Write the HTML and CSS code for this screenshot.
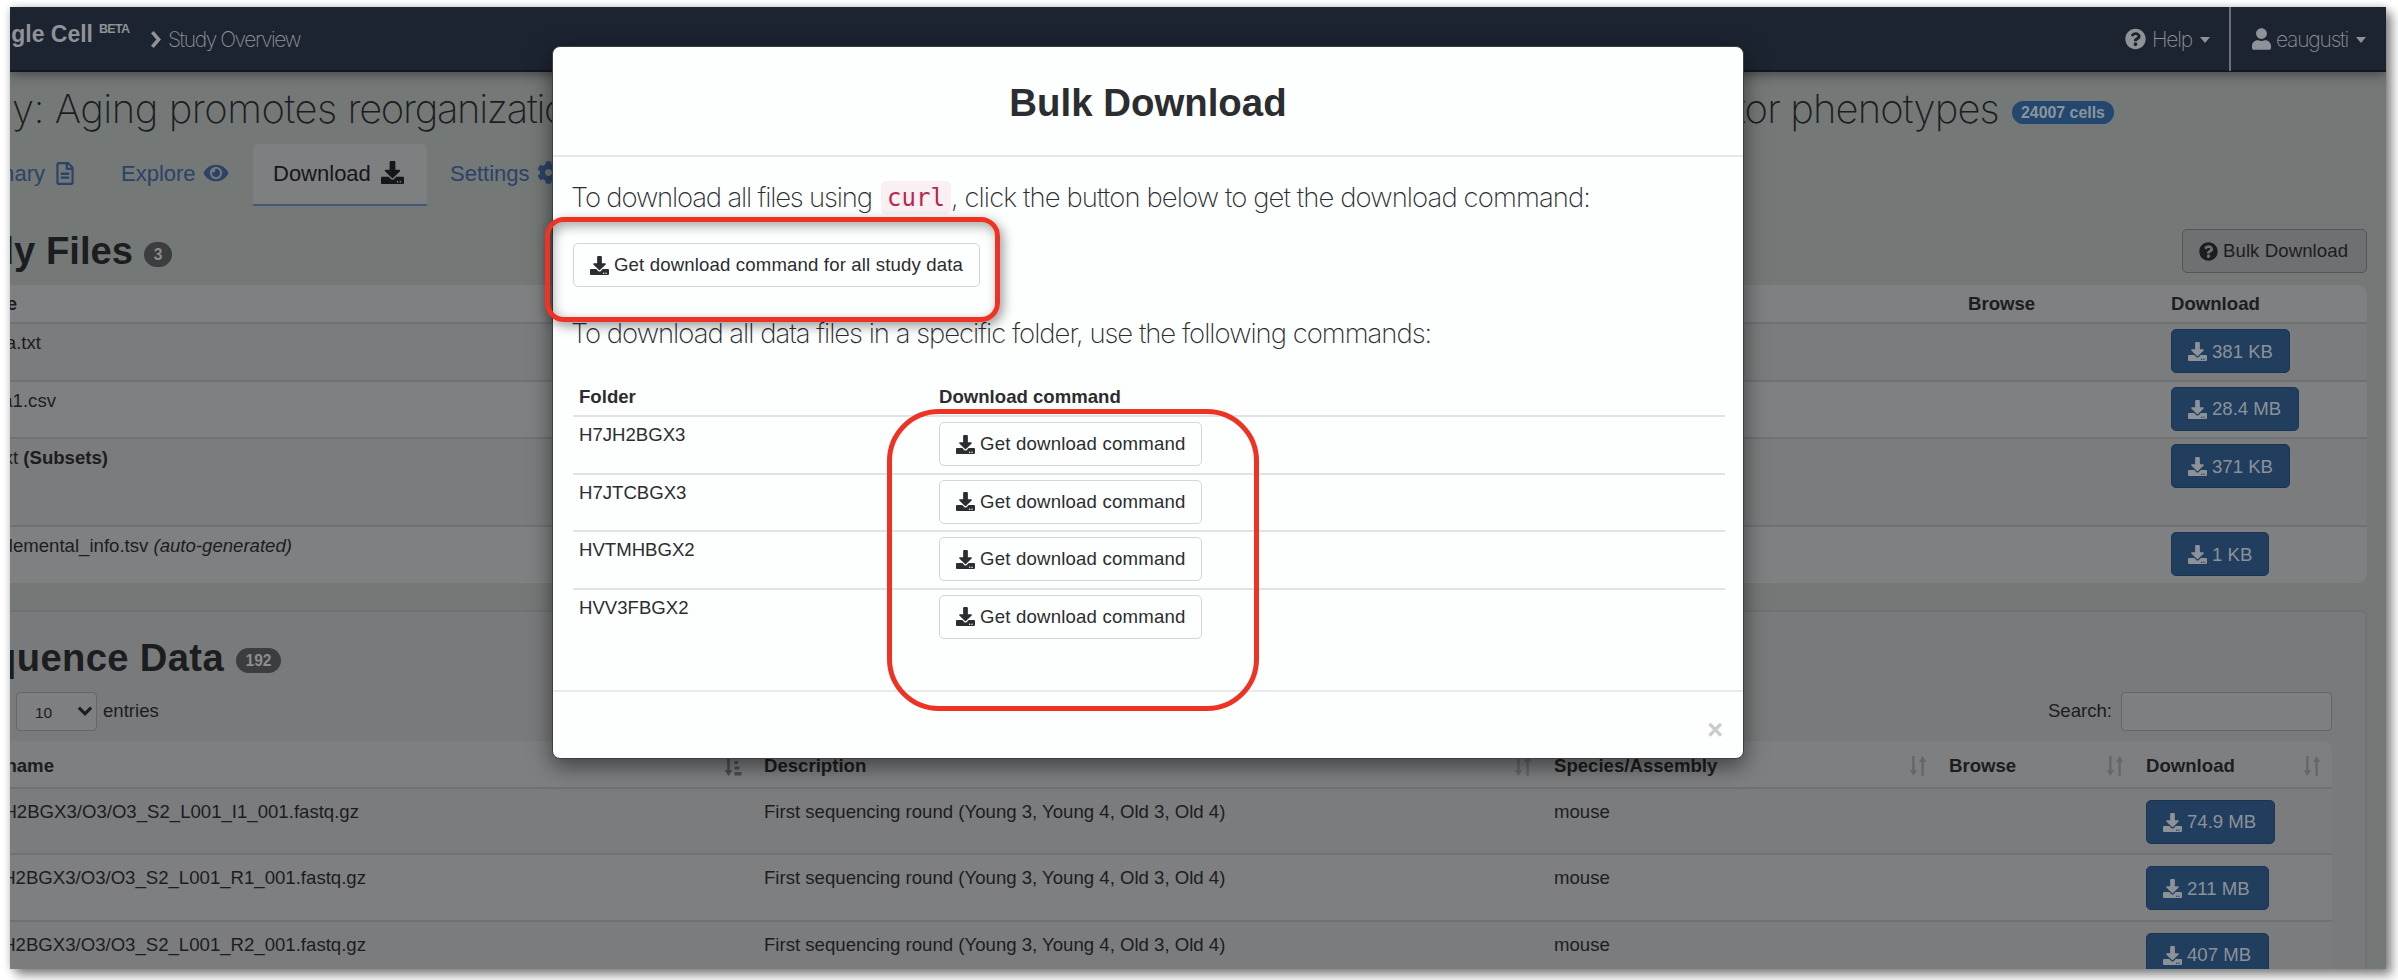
FILE: index.html
```html
<!DOCTYPE html>
<html lang="en">
<head>
<meta charset="utf-8">
<title>Single Cell - Study Overview</title>
<link rel="stylesheet" href="styles.css">
</head>
<body>
<svg class="sprite" aria-hidden="true">
  <symbol id="download" viewBox="0 0 512 512"><path d="M216 0h80c13.3 0 24 10.7 24 24v168h87.7c17.8 0 26.7 21.5 14.1 34.1L269.7 378.3c-7.5 7.5-19.8 7.5-27.3 0L90.1 226.1c-12.6-12.6-3.7-34.1 14.1-34.1H192V24c0-13.3 10.7-24 24-24zm296 376v112c0 13.3-10.7 24-24 24H24c-13.3 0-24-10.7-24-24V376c0-13.3 10.7-24 24-24h146.7l49 49c20.1 20.1 52.5 20.1 72.6 0l49-49H488c13.3 0 24 10.7 24 24zm-124 88c0-11-9-20-20-20s-20 9-20 20 9 20 20 20 20-9 20-20zm64 0c0-11-9-20-20-20s-20 9-20 20 9 20 20 20 20-9 20-20z"/></symbol>
  <symbol id="question" viewBox="0 0 512 512"><path d="M504 256c0 136.997-111.043 248-248 248S8 392.997 8 256C8 119.083 119.043 8 256 8s248 111.083 248 248zM262.655 90c-54.497 0-89.255 22.957-116.549 63.758-3.536 5.286-2.353 12.415 2.715 16.258l34.699 26.31c5.205 3.947 12.621 3.008 16.665-2.122 17.864-22.658 30.113-35.797 57.303-35.797 20.429 0 45.698 13.148 45.698 32.958 0 14.976-12.363 22.667-32.534 33.976C247.128 238.528 216 254.941 216 296v4c0 6.627 5.373 12 12 12h56c6.627 0 12-5.373 12-12v-1.333c0-28.462 83.186-29.647 83.186-106.667 0-58.002-60.165-102-116.531-102zM256 338c-25.365 0-46 20.635-46 46 0 25.364 20.635 46 46 46s46-20.636 46-46c0-25.365-20.635-46-46-46z"/></symbol>
  <symbol id="user" viewBox="0 0 448 512"><path d="M224 256c70.7 0 128-57.3 128-128S294.7 0 224 0 96 57.3 96 128s57.3 128 128 128zm89.6 32h-16.7c-22.2 10.2-46.9 16-72.9 16s-50.6-5.8-72.9-16h-16.7C60.2 288 0 348.2 0 422.4V464c0 26.5 21.5 48 48 48h352c26.5 0 48-21.5 48-48v-41.6c0-74.2-60.2-134.4-134.4-134.4z"/></symbol>
  <symbol id="eye" viewBox="0 0 576 512"><path d="M572.52 241.4C518.29 135.59 410.93 64 288 64S57.68 135.64 3.48 241.41a32.35 32.35 0 0 0 0 29.19C57.71 376.41 165.07 448 288 448s230.32-71.64 284.52-177.41a32.35 32.35 0 0 0 0-29.19zM288 400a144 144 0 1 1 144-144 143.93 143.93 0 0 1-144 144zm0-240a95.31 95.31 0 0 0-25.31 3.79 47.85 47.85 0 0 1-66.9 66.9A95.78 95.78 0 1 0 288 160z"/></symbol>
  <symbol id="file" viewBox="0 0 384 512"><path d="M288 248v28c0 6.6-5.4 12-12 12H108c-6.6 0-12-5.4-12-12v-28c0-6.6 5.4-12 12-12h168c6.6 0 12 5.4 12 12zm-12 72H108c-6.6 0-12 5.4-12 12v28c0 6.6 5.4 12 12 12h168c6.6 0 12-5.4 12-12v-28c0-6.6-5.4-12-12-12zm108-188.1V464c0 26.5-21.5 48-48 48H48c-26.5 0-48-21.5-48-48V48C0 21.5 21.5 0 48 0h204.1C264.8 0 277 5.1 286 14.1L369.9 98c9 8.9 14.1 21.2 14.1 33.9zm-128-80V128h76.1L256 51.9zM336 464V176H232c-13.3 0-24-10.7-24-24V48H48v416h288z"/></symbol>
  <symbol id="cog" viewBox="0 0 512 512"><path d="M487.4 315.7l-42.6-24.6c4.3-23.2 4.3-47 0-70.2l42.6-24.6c4.9-2.8 7.1-8.6 5.5-14-11.1-35.6-30-67.8-54.7-94.6-3.8-4.1-10-5.1-14.8-2.3L380.8 110c-17.9-15.4-38.5-27.3-60.8-35.1V25.8c0-5.6-3.9-10.5-9.4-11.7-36.7-8.2-74.3-7.8-109.2 0-5.5 1.2-9.4 6.1-9.4 11.7V75c-22.2 7.9-42.8 19.8-60.8 35.1L88.7 85.5c-4.9-2.8-11-1.9-14.8 2.3-24.7 26.7-43.6 58.9-54.7 94.6-1.7 5.4.6 11.2 5.5 14L67.3 221c-4.3 23.2-4.3 47 0 70.2l-42.6 24.6c-4.9 2.8-7.1 8.6-5.5 14 11.1 35.6 30 67.8 54.7 94.6 3.8 4.1 10 5.1 14.8 2.3l42.6-24.6c17.9 15.4 38.5 27.3 60.8 35.1v49.2c0 5.6 3.9 10.5 9.4 11.7 36.7 8.2 74.3 7.8 109.2 0 5.5-1.2 9.4-6.1 9.4-11.7v-49.2c22.2-7.9 42.8-19.8 60.8-35.1l42.6 24.6c4.9 2.8 11 1.9 14.8-2.3 24.7-26.7 43.6-58.9 54.7-94.6 1.5-5.5-.7-11.3-5.6-14.1zM256 336c-44.1 0-80-35.9-80-80s35.9-80 80-80 80 35.9 80 80-35.9 80-80 80z"/></symbol>
  <symbol id="sort" viewBox="0 0 18 20"><path d="M3.200 0h2.400v14H8l-3.600 6L.8 14h2.400zM12.400 20h2.400V6h2.400L13.600 0 10 6h2.400z"/></symbol>
  <symbol id="sort-asc" viewBox="0 0 18 20"><path d="M3.200 0h2.600v14H8.400l-3.900 6L.6 14h2.600zM10.500 0h2v3h-2zM10.500 5h3.500v3h-3.500zM10.500 10.500h5v3h-5zM10.500 16h7v3.500h-7z"/></symbol>
</svg>
<div class="frame">
  <header class="nav">
    <div class="brand">gle Cell</div>
    <div class="beta">BETA</div>
    <svg class="chev" viewBox="0 0 10 18"><path d="M2 2l6 7-6 7" fill="none" stroke="currentColor" stroke-width="3.400"/></svg>
    <div class="crumb">Study Overview</div>
    <div class="nav-help"><svg class="ic22"><use href="#question"/></svg><span class="help">Help</span><i class="caret"></i></div>
    <div class="nav-user"><svg class="usr"><use href="#user"/></svg><span class="uname">eaugusti</span><i class="caret"></i></div>
  </header>
  <div class="title">
    <span class="title-a">y: Aging promotes <span class="tight">reorganization</span></span>
    <span class="title-b">tor phenotypes</span>
    <span class="cells">24007 cells</span>
  </div>
  <nav class="tabs">
    <div class="tab t1"><span class="clip">Summary</span><svg class="i-file"><use href="#file"/></svg></div>
    <div class="tab t2">Explore<svg class="i-eye"><use href="#eye"/></svg></div>
    <div class="tab active">Download<svg class="i-dl"><use href="#download"/></svg></div>
    <div class="tab t4">Settings<svg class="i-dl"><use href="#cog"/></svg></div>
  </nav>
  <div class="files-head">
    <h2 class="h h-files">Study Files</h2><span class="badge b3">3</span>
    <div class="bulk"><svg class="ic"><use href="#question"/></svg>Bulk Download</div>
  </div>
  <section class="files">
    <div class="frow fhead"><b class="cut c-e">Name</b><b>Browse</b><b>Download</b></div>
    <div class="frow odd"><div class="cut c-1">metadata.txt</div><span></span><div class="btn w119"><svg class="ic"><use href="#download"/></svg>381 KB</div></div>
    <div class="frow"><div class="cut c-2">data1.csv</div><span></span><div class="btn w128"><svg class="ic"><use href="#download"/></svg>28.4 MB</div></div>
    <div class="frow odd tall"><div class="cut c-3">txt&nbsp;<b>(Subsets)</b></div><span></span><div class="btn w119"><svg class="ic"><use href="#download"/></svg>371 KB</div></div>
    <div class="frow"><div class="cut c-4">supplemental_info.tsv&nbsp;<em>(auto-generated)</em></div><span></span><div class="btn w98"><svg class="ic"><use href="#download"/></svg>1 KB</div></div>
  </section>
  <section class="panel">
    <div class="seq-head"><h2 class="h h-seq">Sequence Data</h2><span class="badge b192">192</span></div>
    <div class="controls">
      <div class="select">10<svg class="sel-v" viewBox="0 0 14 9"><path d="M1.500 1.500l5.500 5.500 5.500-5.500" fill="none" stroke="currentColor" stroke-width="2.800"/></svg></div>
      <span class="entries">entries</span>
      <span class="search">Search:</span><div class="input"></div>
    </div>
    <div class="seq">
      <div class="srow shead">
        <div class="th"><b class="cut c-n">Filename</b><svg class="so dark"><use href="#sort-asc"/></svg></div>
        <div class="th"><b>Description</b><svg class="so"><use href="#sort"/></svg></div>
        <div class="th"><b>Species/Assembly</b><svg class="so"><use href="#sort"/></svg></div>
        <div class="th"><b>Browse</b><svg class="so"><use href="#sort"/></svg></div>
        <div class="th"><b>Download</b><svg class="so"><use href="#sort"/></svg></div>
      </div>
      <div class="srow odd"><div class="cut s-1">H7JH2BGX3/O3/O3_S2_L001_I1_001.fastq.gz</div><span class="desc">First sequencing round (Young 3, Young 4, Old 3, Old 4)</span><span>mouse</span><span></span><div class="btn w129"><svg class="ic"><use href="#download"/></svg>74.9 MB</div></div>
      <div class="srow"><div class="cut s-2">H7JH2BGX3/O3/O3_S2_L001_R1_001.fastq.gz</div><span class="desc">First sequencing round (Young 3, Young 4, Old 3, Old 4)</span><span>mouse</span><span></span><div class="btn w123"><svg class="ic"><use href="#download"/></svg>211 MB</div></div>
      <div class="srow odd"><div class="cut s-2">H7JH2BGX3/O3/O3_S2_L001_R2_001.fastq.gz</div><span class="desc">First sequencing round (Young 3, Young 4, Old 3, Old 4)</span><span>mouse</span><span></span><div class="btn w123"><svg class="ic"><use href="#download"/></svg>407 MB</div></div>
    </div>
  </section>
</div>
<div class="modal">
  <div class="m-head">Bulk Download</div>
  <div class="m-body">
    <p class="lead"><span class="l1">To download all files using</span><code>curl</code><span class="l2">, click the button below to get the download command:</span></p>
    <div class="get get-all"><svg class="ic"><use href="#download"/></svg><span>Get download command for all study data</span></div>
    <p class="lead lead2"><span class="l3">To download all data files in a specific folder, use the following commands:</span></p>
    <div class="mrow mhead"><b>Folder</b><b>Download command</b></div>
    <div class="mrow"><span>H7JH2BGX3</span><div class="get"><svg class="ic"><use href="#download"/></svg><span>Get download command</span></div></div>
    <div class="mrow"><span>H7JTCBGX3</span><div class="get"><svg class="ic"><use href="#download"/></svg><span>Get download command</span></div></div>
    <div class="mrow"><span>HVTMHBGX2</span><div class="get"><svg class="ic"><use href="#download"/></svg><span>Get download command</span></div></div>
    <div class="mrow"><span>HVV3FBGX2</span><div class="get"><svg class="ic"><use href="#download"/></svg><span>Get download command</span></div></div>
  </div>
  <div class="m-foot">×</div>
</div>
<div class="mark mark-all"></div>
<div class="mark mark-folders"></div>
</body>
</html>
```
FILE: styles.css
```css
* { box-sizing: border-box; }
body {
  margin: 0; padding: 7px 12px 11px 10px; height: 980px; overflow: hidden;
  position: relative; background: #fff; color: #1b1d1f;
  font: 18.6px/28px "Liberation Sans", Arial, sans-serif; white-space: nowrap;
}
.sprite { position: absolute; width: 0; height: 0; }
svg { fill: currentColor; flex: none; display: block; }
.frame {
  width: 2376px; height: 962px; overflow: hidden; background: #747877;
  box-shadow: 6px 6px 10px rgba(0,0,0,.45), 0 0 8px rgba(0,0,0,.2);
}

.nav {
  height: 65px; display: flex; align-items: center; background: #1c2432;
  border-bottom: 2px solid #121820; color: #8f9296; position: relative;
  box-shadow: 0 2px 12px rgba(0,0,0,.45);
}
.brand { width: 83px; display: flex; justify-content: flex-end; font-weight: bold; font-size: 23px; margin-bottom: 9px; }
.beta { width: 52px; padding-left: 6px; font-weight: bold; font-size: 12.5px; margin-bottom: 20px; letter-spacing: -.7px; }
.chev { width: 11px; height: 19px; margin-left: 5px; margin-top: 1px; }
.crumb { font: 200 21px/28px Inter, sans-serif; margin: 2px 0 0 7px; letter-spacing: -1.45px; }
.nav-help { margin-left: auto; width: 104px; display: flex; align-items: center; height: 65px; }
.nav-user { width: 157px; padding-left: 21px; display: flex; align-items: center; height: 65px; border-left: 2px solid #6b6f75; }
.ic22 { width: 21px; height: 22px; }
.usr { width: 19px; height: 22px; }
.help, .uname { font: 200 21px/28px Inter, sans-serif; margin: 2px 0 0 6px; letter-spacing: -1.2px; width: 48px; }
.uname { width: 80px; margin-left: 5px; }
.caret { border: 5.5px solid transparent; border-top: 6.5px solid #8f9296; border-bottom: 0; margin-top: 2px; }

.title { height: 72px; padding-top: 1px; display: flex; align-items: center; font: 200 40px/60px Inter, sans-serif; }
.title-a { width: 1725px; padding-left: 2px; letter-spacing: -.5px; }
.tight { letter-spacing: -1.35px; }
.title-b { width: 277px; letter-spacing: -.9px; }
.cells { width: 102px; height: 23px; border-radius: 12px; background: #23476e; color: #8b949d; font: bold 15.9px/24px "Liberation Sans", sans-serif; text-align: center; margin-top: 7px; }

.tabs { display: flex; height: 62px; font-size: 22px; color: #2b4368; }
.tab { display: flex; align-items: center; padding-bottom: 3px; }
.t1 { width: 111px; }
.clip { width: 35px; display: flex; justify-content: flex-end; }
.i-file { width: 18px; height: 23px; margin-left: 11px; }
.t2 { width: 132px; }
.i-eye { width: 26px; height: 22px; margin-left: 7px; margin-bottom: 2px; }
.i-dl { width: 23px; height: 23px; margin-left: 10px; margin-bottom: 3px; }
.active { width: 174px; padding-left: 20px; background: #7e7f81; border-bottom: 2px solid #44577a; border-radius: 6px 6px 0 0; color: #15171a; padding-bottom: 1px; }
.t4 { padding-left: 23px; }
.t4 .i-dl { margin-left: 7px; }

.files-head { height: 79px; padding-top: 11px; display: flex; align-items: center; }
.h { margin: 0; font-size: 38.2px; line-height: 50px; display: flex; justify-content: flex-end; flex: none; }
.h-files { width: 123px; }
.badge { background: #3b3d3e; color: #8c8d8e; font-weight: bold; font-size: 15.6px; line-height: 25px; height: 25px; border-radius: 13px; text-align: center; }
.b3 { width: 28px; margin-left: 11px; margin-top: 7px; }
.bulk { margin-left: auto; margin-right: 19px; width: 185px; height: 44px; border: 1.5px solid #545757; border-radius: 5px; background: #6f7071; display: flex; align-items: center; padding-left: 16px; letter-spacing: .08px; }
.ic { width: 19px; height: 19px; margin-right: 5px; }

.files { width: 2357px; border-radius: 0 9px 9px 0; background: #7f8082; overflow: hidden; }
.frow { display: grid; grid-template-columns: 1958px 203px 1fr; height: 57.6px; padding-top: 5px; border-top: 2px solid #6f7173; }
.odd { background: #7b7c7d; }
.fhead { height: 37px; border: 0; padding-top: 5px; }
.tall { height: 88px; }
.cut { display: flex; justify-content: flex-end; justify-self: start; }
.c-e { width: 7px; } .c-1 { width: 31px; } .c-2 { width: 46px; } .c-3 { width: 98px; } .c-4 { width: 282px; }
.btn { height: 44px; display: flex; align-items: center; padding-left: 16px; padding-top: 1px; border: 1px solid #1b3552; border-radius: 5px; background: #213e5f; color: #8c9298; }
.w98 { width: 98px; } .w119 { width: 119px; } .w123 { width: 123px; } .w128 { width: 128px; } .w129 { width: 129px; }

.panel { width: 2357px; margin-top: 27px; height: 420px; border: 2px solid #6f7374; border-left: 0; border-radius: 0 6px 0 0; background: #797a7b; padding-top: 19px; }
.seq-head { height: 54px; display: flex; align-items: center; }
.h-seq { width: 214px; letter-spacing: .35px; }
.b192 { width: 45px; margin-left: 12px; margin-top: 5px; }
.controls { display: flex; padding: 7px 33px 10px 6px; align-items: center; height: 56px; }
.select { width: 81px; height: 39px; border: 1.5px solid #646668; border-radius: 4px; background: #7e7f81; display: flex; align-items: center; font-size: 15.5px; padding: 3px 3px 0 18px; justify-content: space-between; }
.sel-v { width: 16px; height: 10px; margin-bottom: 3px; }
.entries { margin-left: 6px; }
.search { margin-left: auto; margin-right: 9px; }
.input { width: 211px; height: 39px; border: 1.5px solid #646668; border-radius: 4px; background: #7e7f81; }
.seq { width: 2322px; border-radius: 0 9px 0 0; background: #7e7f81; overflow: hidden; }
.srow { display: grid; grid-template-columns: 754px 790px 395px 197px 1fr; height: 66.4px; padding-top: 9px; border-top: 2px solid #6f7173; }
.shead { height: 46px; border: 0; padding: 9px 0 5px; }
.srow .btn { margin-top: 2px; }
.th { display: flex; align-items: center; justify-content: space-between; padding-right: 22px; }
.th:last-child { padding-right: 11px; }
.so { width: 18px; height: 20px; color: #656769; }
.dark { color: #4c4e50; }
.c-n { width: 44px; } .s-1 { width: 349px; } .s-2 { width: 356px; }

.modal {
  position: absolute; left: 552px; top: 46px; width: 1192px; height: 713px;
  background: #fdfefe; border: 1px solid #3c3f42; border-radius: 8px; color: #2b2d30;
  box-shadow: 0 7px 22px rgba(0,0,0,.5);
}
.m-head { height: 110px; border-bottom: 2px solid #e6e7e9; text-align: center; font-weight: bold; font-size: 38.4px; line-height: 112px; }
.m-body { padding: 22px 18px 0 20px; height: 535px; border-bottom: 2px solid #e9eaeb; }
.lead { margin: 0 0 0 -2px; font: 250 27.5px/36px Inter, sans-serif; height: 36px; display: flex; }
.l1 { width: 310px; letter-spacing: -1.18px; }
.l2 { letter-spacing: -.92px; }
.l3 { letter-spacing: -1.02px; }
code { width: 70px; height: 33px; margin-top: 2px; text-align: center; background: #f8f0f3; color: #bb2650; border-radius: 5px; font: 24px/35px "DejaVu Sans Mono", monospace; }
.get { width: 263px; height: 44px; border: 1.5px solid #d3d5d7; border-radius: 5px; display: flex; align-items: center; padding-left: 16px; letter-spacing: .2px; }
.get-all { width: 407px; margin-top: 28px; letter-spacing: .15px; }
.lead2 { margin-top: 28px; height: 66px; }
.mrow { display: grid; grid-template-columns: 360px 1fr; height: 57.6px; padding: 4px 0 0 6px; border-top: 2px solid #e2e3e4; }
.mhead { height: 34px; border: 0; padding-top: 2px; }
.mrow .get { margin-top: 1px; }
.m-foot { text-align: right; padding: 24px 20px 0 0; font-weight: bold; font-size: 27px; color: #c9cacb; }

.mark { position: absolute; border: 5px solid #ee3324; }
.mark-all { left: 545px; top: 217px; width: 455px; height: 105px; border-radius: 19px; box-shadow: 3px 4px 12px rgba(0,0,0,.4), inset 3px 4px 12px rgba(0,0,0,.35); }
.mark-folders { left: 887px; top: 409px; width: 372px; height: 302px; border-radius: 52px; }
```
